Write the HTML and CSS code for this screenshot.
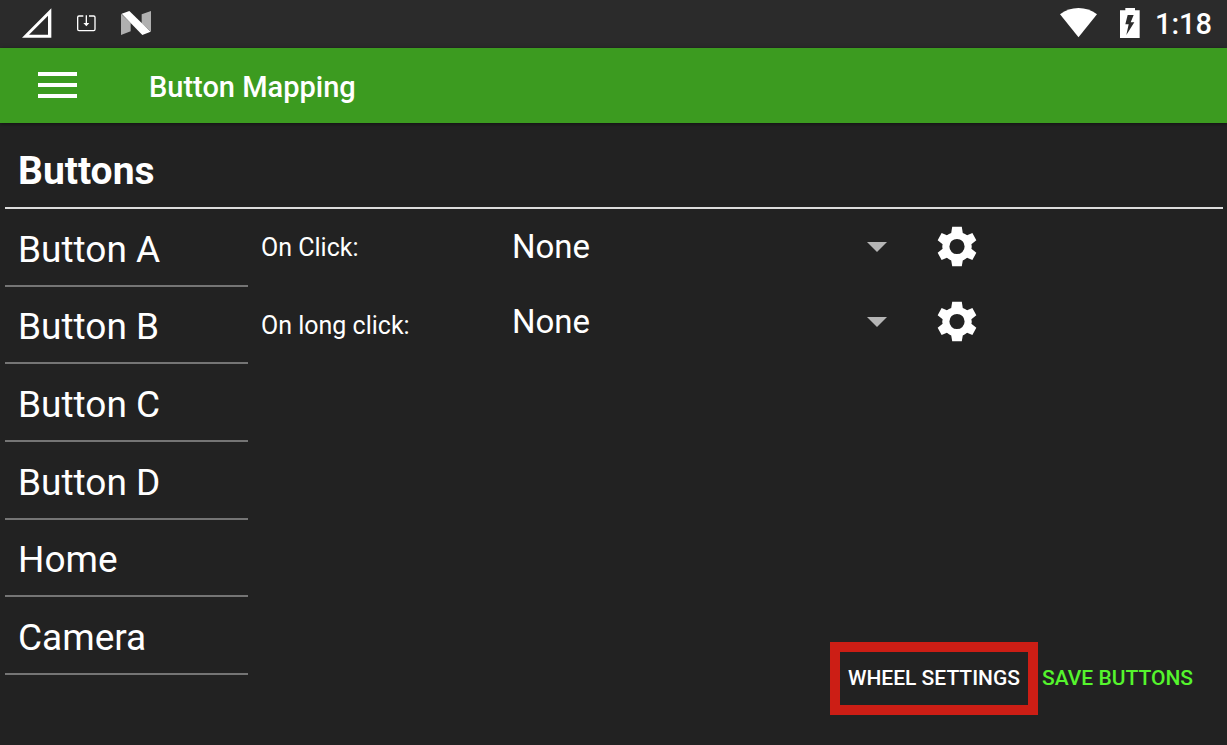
FILE: index.html
```html
<!DOCTYPE html>
<html lang="en">
<head>
<meta charset="utf-8">
<title>Button Mapping</title>
<link rel="stylesheet" href="styles.css">
</head>
<body>
<div class="status-bar">
  <div class="status-group notifications">
    <svg class="status-icon" viewBox="66 24 90 90" aria-hidden="true"><path fill="#fff" fill-rule="evenodd" d="M66 113 154 25V113ZM87 104H144V47Z"/></svg>
    <svg class="status-icon" viewBox="213 24 90 90" aria-hidden="true"><path fill="none" stroke="#fff" stroke-width="4" d="M250 48H237Q233 48 233 52V88Q233 92 237 92H281Q285 92 285 88V52Q285 48 281 48H267"/><path fill="#fff" d="M257 46H261V69H268L259 79 250 69H257Z"/></svg>
    <svg class="status-icon" viewBox="360 24 90 90" aria-hidden="true"><path fill="#b0b0b0" d="M363 41 392 69V94L363 105ZM425 43 453 33V95L425 70Z"/><path fill="#fff" d="M365 41 388 33 452 95 427 105Z"/></svg>
  </div>
  <div class="status-group system">
    <svg class="wifi" viewBox="99 24 111 90" aria-hidden="true"><path fill="#fff" d="M99 43Q124 24 154.500 24T210 43L154.500 112Z"/></svg>
    <svg class="battery" viewBox="279 24 60 90" aria-hidden="true"><path fill="#fff" fill-rule="evenodd" d="M295 24H324V31H338V114H279V31H295ZM302 45 295 73H305L298 105 322 67H311L320 45Z"/></svg>
    <time class="clock">1:18</time>
  </div>
</div>
<header class="app-bar">
  <button class="menu-button" type="button" aria-label="Open menu"><span></span><span></span><span></span></button>
  <h1 class="app-title">Button Mapping</h1>
</header>
<main class="page">
  <h2 class="section-title">Buttons</h2>
  <div class="content">
    <nav class="button-list" aria-label="Buttons">
      <button class="list-item" type="button">Button A</button>
      <button class="list-item" type="button">Button B</button>
      <button class="list-item" type="button">Button C</button>
      <button class="list-item" type="button">Button D</button>
      <button class="list-item" type="button">Home</button>
      <button class="list-item" type="button">Camera</button>
    </nav>
    <section class="details">
      <div class="mapping">
        <div class="labels">
          <label for="click">On Click:</label>
          <label for="long-click">On long click:</label>
        </div>
        <div class="controls">
          <div class="control-row">
            <div class="spinner">
              <select id="click"><option>None</option></select>
              <svg class="arrow" viewBox="0 0 20 10" aria-hidden="true"><path fill="#b5b5b5" d="M0 0H20L10 10Z"/></svg>
            </div>
            <button class="gear-button" type="button" aria-label="Configure click">
              <svg class="gear" viewBox="262 33 121 124" aria-hidden="true"><path fill="#fff" fill-rule="evenodd" d="M308 35H337L340 54Q347 57 353 61L369 54 381 76 366 88Q368 95 366 102L381 114 369 136 353 129Q347 134 340 137L337 155H308L305 137Q298 134 292 129L276 136 264 114 279 102Q277 95 279 88L264 76 276 54 292 61Q298 57 305 54ZM322.500 72A23 23 0 1 0 322.500 118A23 23 0 1 0 322.500 72Z"/></svg>
            </button>
          </div>
          <div class="control-row">
            <div class="spinner">
              <select id="long-click"><option>None</option></select>
              <svg class="arrow" viewBox="0 0 20 10" aria-hidden="true"><path fill="#b5b5b5" d="M0 0H20L10 10Z"/></svg>
            </div>
            <button class="gear-button" type="button" aria-label="Configure long click">
              <svg class="gear" viewBox="262 33 121 124" aria-hidden="true"><path fill="#fff" fill-rule="evenodd" d="M308 35H337L340 54Q347 57 353 61L369 54 381 76 366 88Q368 95 366 102L381 114 369 136 353 129Q347 134 340 137L337 155H308L305 137Q298 134 292 129L276 136 264 114 279 102Q277 95 279 88L264 76 276 54 292 61Q298 57 305 54ZM322.500 72A23 23 0 1 0 322.500 118A23 23 0 1 0 322.500 72Z"/></svg>
            </button>
          </div>
        </div>
      </div>
      <div class="actions">
        <button class="action wheel" type="button">WHEEL SETTINGS</button>
        <button class="action save" type="button">SAVE BUTTONS</button>
      </div>
    </section>
  </div>
</main>
</body>
</html>
```

FILE: styles.css
```css
* { box-sizing: border-box; }

body {
  margin: 0;
  min-height: 100vh;
  display: flex;
  flex-direction: column;
  background: #222222;
  color: #ffffff;
  font-family: Roboto, sans-serif;
}

button, select {
  margin: 0;
  padding: 0;
  border: 0;
  background: none;
  color: inherit;
  font: inherit;
}

svg { display: block; overflow: visible; }

.status-bar {
  height: 48px;
  padding: 0 15px 2px 22px;
  display: flex;
  align-items: center;
  justify-content: space-between;
  background: #2b2b2b;
}

.status-group { display: flex; align-items: center; }
.notifications { gap: 19px; }
.status-icon { width: 30px; height: 30px; }
.wifi { width: 37px; height: 30px; margin-right: 23px; }
.battery { width: 20px; height: 30px; margin-right: 15px; }
.clock { font-size: 29px; font-weight: 500; line-height: 46px; padding-top: 2px; }

.app-bar {
  height: 75px;
  padding: 0 38px;
  display: flex;
  align-items: center;
  gap: 72px;
  background: #3c9b20;
  box-shadow: 0 1px 4px rgba(0, 0, 0, 0.5);
}

.menu-button {
  width: 39px;
  padding-bottom: 2px;
  display: flex;
  flex-direction: column;
  gap: 7px;
}
.menu-button span { width: 100%; height: 4px; background: #ffffff; }

.app-title { margin: 0; padding-top: 2px; font-size: 29px; font-weight: 500; }

.page {
  flex: 1;
  padding: 0 4px 0 5px;
  display: flex;
  flex-direction: column;
}

.section-title {
  margin: 0;
  padding: 10px 13px 0;
  height: 86px;
  line-height: 76px;
  font-size: 39px;
  font-weight: 700;
  border-bottom: 2px solid #dcdcdc;
}

.content { flex: 1; display: flex; }

.button-list {
  width: 243px;
  min-height: 466px;
  display: grid;
  grid-auto-rows: 1fr;
  align-self: flex-start;
}

.list-item {
  padding: 6px 13px 0;
  border-bottom: 2px solid #757575;
  text-align: left;
  font-size: 37px;
  line-height: 44px;
}

.details {
  flex: 1;
  padding: 0 0 30px 13px;
  display: flex;
  flex-direction: column;
  justify-content: space-between;
}

.mapping { display: flex; }

.labels { width: 239px; display: flex; flex-direction: column; }
.labels label { font-size: 25px; line-height: 78px; }

.controls { width: 511px; }
.control-row { height: 75px; display: flex; align-items: center; }

.spinner { flex: 1; position: relative; }
.spinner select {
  width: 100%;
  height: 75px;
  padding: 0 48px 0 12px;
  appearance: none;
  font-size: 33px;
}
.arrow {
  position: absolute;
  right: 16px;
  top: 33px;
  width: 20px;
  height: 10px;
  pointer-events: none;
}

.gear-button { width: 108px; height: 75px; display: flex; align-items: center; justify-content: center; }
.gear { width: 40px; height: 41px; }

.actions { display: flex; justify-content: flex-end; padding-right: 30px; gap: 4px; }
.action { height: 73px; font-size: 21px; font-weight: 500; }
.wheel { padding: 0 8px 2px; border: 10px solid #cc1e15; }
.save { padding-bottom: 2px; color: #55f52d; }
```
